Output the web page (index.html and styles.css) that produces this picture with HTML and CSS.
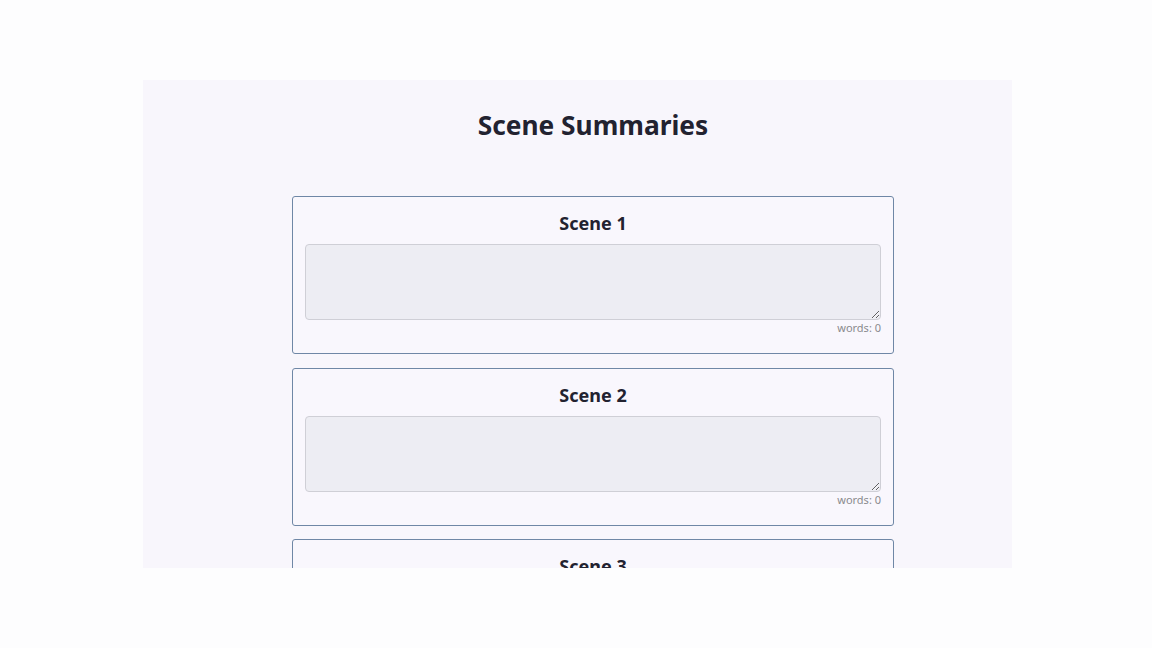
FILE: index.html
```html
<!DOCTYPE html>
<html>
<head>
<meta charset="utf-8">
<link rel="stylesheet" href="styles.css">
</head>
<body>
<div class="stage">
  <div class="panel">
    <h1 class="title">Scene Summaries</h1>
    <div class="list">
      <div class="card">
        <h3 class="card-title">Scene 1</h3>
        <textarea class="summary"></textarea>
        <div class="count">words: 0</div>
      </div>
      <div class="card">
        <h3 class="card-title">Scene 2</h3>
        <textarea class="summary"></textarea>
        <div class="count">words: 0</div>
      </div>
      <div class="card">
        <h3 class="card-title">Scene 3</h3>
        <textarea class="summary"></textarea>
        <div class="count">words: 0</div>
      </div>
    </div>
  </div>
</div>
</body>
</html>
```
FILE: styles.css
```css
html, body {
  margin: 0;
  padding: 0;
  background: #fdfdfe;
  font-family: "Noto Sans", "Open Sans", sans-serif;
  color: #222230;
}
.stage {
  width: 1152px;
  height: 648px;
  padding-top: 80px;
  box-sizing: border-box;
}
.panel {
  margin-left: 143px;
  width: 869px;
  height: 488px;
  overflow: hidden;
  background: #f8f6fc;
  box-sizing: border-box;
  padding: 0 0 0 31px;
}
.title {
  margin: 0;
  padding-top: 27px;
  height: 116px;
  box-sizing: border-box;
  text-align: center;
  font-size: 26.3px;
  font-weight: 700;
  line-height: 36px;
}
.list {
  display: flex;
  flex-direction: column;
  align-items: center;
  gap: 13.5px;
}
.card {
  width: 602px;
  box-sizing: border-box;
  border: 1.5px solid #6f87a6;
  border-radius: 3px;
  background: #f9f7fd;
  padding: 14px 12px 18px;
  display: flex;
  flex-direction: column;
}
.card-title {
  margin: 0 0 8px;
  text-align: center;
  font-size: 18px;
  font-weight: 700;
  line-height: 25px;
  color: #222230;
}
.summary {
  display: block;
  width: 100%;
  height: 76px;
  box-sizing: border-box;
  border: 1px solid #cfcfd6;
  border-radius: 4px;
  background: #ededf3;
  margin: 0;
  font-family: inherit;
}
.count {
  text-align: right;
  font-size: 11px;
  line-height: 15px;
  margin-top: 0;
  color: #8a8a8e;
}
```
